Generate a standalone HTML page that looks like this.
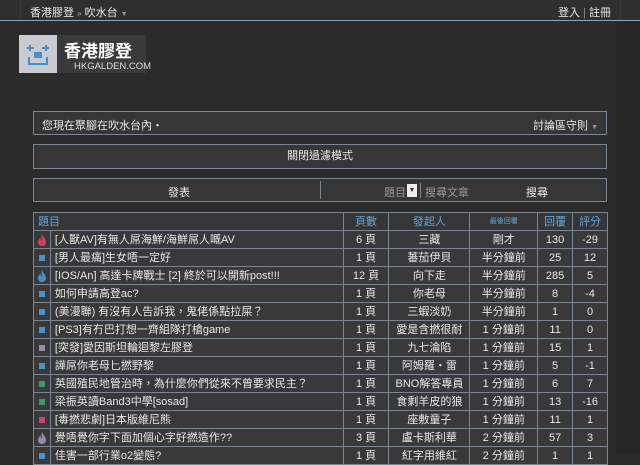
<!DOCTYPE html>
<html><head><meta charset="utf-8"><style>
*{margin:0;padding:0;box-sizing:border-box}
body{width:640px;height:454px;overflow:hidden;background:#2b2b2b;font-family:"Liberation Sans","Noto Sans CJK TC",sans-serif;font-size:11px;color:#e8e8e8;position:relative}
.rs{position:absolute;left:616px;top:0;width:24px;height:454px;background:#262626}
.top{position:absolute;left:0;top:0;width:640px;height:21px;background:#2f2f2f;border-bottom:1px solid #8aa6bb}
.top .l{position:absolute;left:30px;top:4px}
.top .r{position:absolute;left:558px;top:4px}
.vl{position:absolute;top:0;width:1px;height:20px;background:#3a3a3a}
.logo{position:absolute;left:19px;top:35px;width:127px;height:38px;background:#3a3a3a}
.logo .ic{position:absolute;left:0;top:0;width:38px;height:38px;background:#c8ccd0}
.logo .t{position:absolute;left:45px;top:2px;font-size:17px;color:#fff;font-weight:bold}
.logo .d{position:absolute;left:55px;top:26px;font-size:9.5px;color:#ddd}
.box{position:absolute;left:33px;width:574px;background:#363636;border:1px solid #7a8590}
.tbl{position:absolute;left:33px;top:212px;border-collapse:collapse;width:575px;background:#393939}
.tbl td{border:1px solid #7a8590;height:18px;padding:0;text-align:center;white-space:nowrap;overflow:hidden;line-height:16px}
.tbl td.t{text-align:left;padding-left:4px}
.hd td{color:#5ea6df;background:#363636}
.sq{display:inline-block;width:6px;height:6px;vertical-align:middle}
svg.f{vertical-align:middle}
</style></head><body>
<div class="rs"></div>
<div class="top"><div class="vl" style="left:20px"></div><div class="vl" style="left:620px"></div>
<span class="l">香港膠登 <span style="font-size:8px;color:#aaa">»</span> 吹水台 <span style="font-size:7px;color:#999">▼</span></span>
<span class="r">登入 <span style="color:#888">|</span> 註冊</span></div>
<div class="logo"><div class="ic"><svg width="38" height="38"><g stroke="#4a90c8" stroke-width="2" fill="none"><path d="M8 13h7M11 10v6M23 13h7M27 10v6M10 22v7h18v-7"/></g><rect x="15" y="17" width="8" height="6" fill="#4a90c8"/></svg></div>
<div class="t">香港膠登</div><div class="d">HKGALDEN.COM</div></div>
<div class="box" style="top:111px;height:24px"><span style="position:absolute;left:8px;top:5px">您現在聚腳在吹水台內・</span><span style="position:absolute;right:8px;top:5px">討論區守則 <span style="font-size:7px;color:#999">▼</span></span></div>
<div class="box" style="top:144px;height:25px;text-align:center;line-height:23px">關閉過濾模式</div>
<div class="box" style="top:178px;height:24px"><span style="position:absolute;left:134px;top:5px">發表</span><div style="position:absolute;left:286px;top:2px;width:1px;height:18px;background:#7a8590"></div><span style="position:absolute;left:350px;top:5px;color:#999">題目</span><span style="position:absolute;left:373px;top:5px;width:10px;height:13px;background:#eee;color:#333;font-size:7px;text-align:center;line-height:13px">▼</span><div style="position:absolute;left:386px;top:4px;width:1px;height:15px;background:#888"></div><span style="position:absolute;left:391px;top:5px;color:#999">搜尋文章</span><span style="position:absolute;left:492px;top:5px">搜尋</span></div>
<table class="tbl">
<colgroup><col style="width:17px"><col style="width:293px"><col style="width:46px"><col style="width:81px"><col style="width:68px"><col style="width:35px"><col style="width:35px"></colgroup>
<tr class="hd"><td class="t" colspan="2">題目</td><td>頁數</td><td>發起人</td><td style="font-size:7px">最後回覆</td><td>回覆</td><td>評分</td></tr>
<tr><td><svg class="f" width="8" height="12"><path d="M4 0C5 3 8 5 8 8C8 11 6 12 4 12C2 12 0 11 0 8C0 6 2 5 2 3C3 5 3 6 4 7C4 5 3 2 4 0Z" fill="#d0405a"/></svg></td><td class="t">[人獸AV]有無人屌海鮮/海鮮屌人嘅AV</td><td>6 頁</td><td>三藏</td><td>剛才</td><td>130</td><td>-29</td></tr>
<tr><td><span class="sq" style="background:#4a90c8"></span></td><td class="t">[男人最痛]生女唔一定好</td><td>1 頁</td><td>蕃茄伊貝</td><td>半分鐘前</td><td>25</td><td>12</td></tr>
<tr><td><svg class="f" width="8" height="12"><path d="M4 0C5 3 8 5 8 8C8 11 6 12 4 12C2 12 0 11 0 8C0 6 2 5 2 3C3 5 3 6 4 7C4 5 3 2 4 0Z" fill="#4a90c8"/></svg></td><td class="t">[IOS/An] 高達卡牌戰士 [2] 終於可以開新post!!!</td><td>12 頁</td><td>向下走</td><td>半分鐘前</td><td>285</td><td>5</td></tr>
<tr><td><span class="sq" style="background:#4a90c8"></span></td><td class="t">如何申請高登ac?</td><td>1 頁</td><td>你老母</td><td>半分鐘前</td><td>8</td><td>-4</td></tr>
<tr><td><span class="sq" style="background:#4a90c8"></span></td><td class="t">(美漫聯) 有沒有人告訴我，鬼佬係點拉屎？</td><td>1 頁</td><td>三蝦淡奶</td><td>半分鐘前</td><td>1</td><td>0</td></tr>
<tr><td><span class="sq" style="background:#4a90c8"></span></td><td class="t">[PS3]有冇巴打想一齊組隊打槍game</td><td>1 頁</td><td>愛是含撚很耐</td><td>1 分鐘前</td><td>11</td><td>0</td></tr>
<tr><td><span class="sq" style="background:#9a8aaa"></span></td><td class="t">[突發]愛因斯坦輪迴黎左膠登</td><td>1 頁</td><td>九七淪陷</td><td>1 分鐘前</td><td>15</td><td>1</td></tr>
<tr><td><span class="sq" style="background:#4a90c8"></span></td><td class="t">譁屌你老母匕撚野黎</td><td>1 頁</td><td>阿姆羅・雷</td><td>1 分鐘前</td><td>5</td><td>-1</td></tr>
<tr><td><span class="sq" style="background:#3a9a6a"></span></td><td class="t">英國殖民地管治時，為什麼你們從來不曾要求民主？</td><td>1 頁</td><td>BNO解答專員</td><td>1 分鐘前</td><td>6</td><td>7</td></tr>
<tr><td><span class="sq" style="background:#3a9a6a"></span></td><td class="t">梁振英讀Band3中學[sosad]</td><td>1 頁</td><td>食剩羊皮的狼</td><td>1 分鐘前</td><td>13</td><td>-16</td></tr>
<tr><td><span class="sq" style="background:#d0407a"></span></td><td class="t">[毒撚悲劇]日本版維尼熊</td><td>1 頁</td><td>座敷童子</td><td>1 分鐘前</td><td>11</td><td>1</td></tr>
<tr><td><svg class="f" width="8" height="12"><path d="M4 0C5 3 8 5 8 8C8 11 6 12 4 12C2 12 0 11 0 8C0 6 2 5 2 3C3 5 3 6 4 7C4 5 3 2 4 0Z" fill="#9a8aaa"/></svg></td><td class="t">覺唔覺你字下面加個心字好撚造作??</td><td>3 頁</td><td>盧卡斯利華</td><td>2 分鐘前</td><td>57</td><td>3</td></tr>
<tr><td><span class="sq" style="background:#4a90c8"></span></td><td class="t">佳害一部行業o2變態?</td><td>1 頁</td><td>紅字用維紅</td><td>2 分鐘前</td><td>1</td><td>1</td></tr>
</table>
</body></html>
